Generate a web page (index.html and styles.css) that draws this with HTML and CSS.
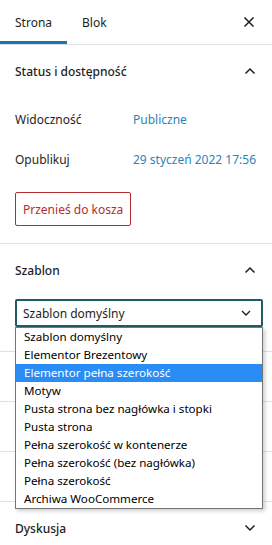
FILE: index.html
```html
<!DOCTYPE html>
<html lang="pl">
<head>
    <meta charset="UTF-8">
    <meta name="viewport" content="width=device-width, initial-scale=1.0">
    <title>Ustawienia strony</title>
    <link rel="stylesheet" href="styles.css">
</head>
<body>
    <div class="sidebar">
        <div class="tabs">
            <button class="tab tab-active">Strona</button>
            <button class="tab">Blok</button>
            <button class="close-button" aria-label="Zamknij">
                <svg width="12" height="12" viewBox="0 0 12 12"><path d="M1.5 1.5l9 9M10.5 1.5l-9 9" stroke="#1e1e1e" stroke-width="1.5" fill="none"/></svg>
            </button>
        </div>

        <!-- Status -->
        <div class="panel">
            <div class="panel-header">
                <span>Status i dostępność</span>
                <svg class="chevron" width="12" height="8" viewBox="0 0 12 8"><path d="M1.5 6.5l4.5-4.5 4.5 4.5" stroke="#1e1e1e" stroke-width="1.5" fill="none"/></svg>
            </div>
            <div class="panel-body status-body">
                <div class="status-row">
                    <span class="status-label">Widoczność</span>
                    <span class="status-value">Publiczne</span>
                </div>
                <div class="status-row">
                    <span class="status-label">Opublikuj</span>
                    <span class="status-value">29 styczeń 2022 17:56</span>
                </div>
                <button class="trash-button">Przenieś do kosza</button>
            </div>
        </div>

        <!-- Szablon -->
        <div class="panel template-panel">
            <div class="panel-header">
                <span>Szablon</span>
                <svg class="chevron" width="12" height="8" viewBox="0 0 12 8"><path d="M1.5 6.5l4.5-4.5 4.5 4.5" stroke="#1e1e1e" stroke-width="1.5" fill="none"/></svg>
            </div>
            <div class="panel-body template-body">
                <div class="select-box">
                    <span>Szablon domyślny</span>
                    <svg width="10" height="6" viewBox="0 0 10 6"><path d="M1 1l4 4 4-4" stroke="#1e1e1e" stroke-width="1.3" fill="none"/></svg>
                </div>
            </div>
            <ul class="select-list">
                <li>Szablon domyślny</li>
                <li>Elementor Brezentowy</li>
                <li class="selected">Elementor pełna szerokość</li>
                <li>Motyw</li>
                <li>Pusta strona bez nagłówka i stopki</li>
                <li>Pusta strona</li>
                <li>Pełna szerokość w kontenerze</li>
                <li>Pełna szerokość (bez nagłówka)</li>
                <li>Pełna szerokość</li>
                <li>Archiwa WooCommerce</li>
            </ul>
        </div>

        <!-- panels hidden under the list -->
        <div class="panel panel-collapsed"></div>
        <div class="panel panel-collapsed"></div>
        <div class="panel panel-collapsed"></div>

        <div class="panel">
            <div class="panel-header">
                <span>Dyskusja</span>
                <svg class="chevron" width="12" height="8" viewBox="0 0 12 8"><path d="M1.5 1.5l4.5 4.5 4.5-4.5" stroke="#1e1e1e" stroke-width="1.5" fill="none"/></svg>
            </div>
        </div>
    </div>
</body>
</html>
```

FILE: styles.css
```css
body {
    margin: 0;
    padding: 0;
    font-family: "Noto Sans", "Open Sans", sans-serif;
    font-size: 12px;
    color: #1e1e1e;
    background-color: #fff;
    overflow: hidden;
}

.sidebar {
    width: 272px;
    position: relative;
}

/* Tabs */
.tabs {
    display: flex;
    align-items: stretch;
    height: 44px;
    border-bottom: 1px solid #e0e0e0;
}

.tab {
    border: none;
    background: none;
    padding: 0 15px;
    font: inherit;
    color: #1e1e1e;
    cursor: pointer;
}

.tab-active {
    box-shadow: inset 0 -3px 0 #1a76ac;
}

.close-button {
    margin-left: auto;
    width: 48px;
    border: none;
    background: none;
    display: flex;
    align-items: center;
    justify-content: center;
    padding: 0 0 0 2px;
}

/* Panels */
.panel {
    border-bottom: 1px solid #e0e0e0;
}

.panel-header {
    display: flex;
    justify-content: space-between;
    align-items: center;
    height: 52px;
    padding: 0 16px 0 15px;
    font-weight: 500;
}

.panel-collapsed {
    height: 49px;
}

.status-body {
    padding: 6px 15px 17px;
}

.status-row {
    display: flex;
    align-items: center;
    height: 32px;
    margin-bottom: 8px;
}

.status-label {
    width: 118px;
}

.status-value {
    color: #2b84b8;
}

.trash-button {
    margin-top: 9px;
    height: 34px;
    padding: 0 7px;
    border: 1px solid #b32d2e;
    border-radius: 2px;
    background: #fff;
    color: #b32d2e;
    font: inherit;
}

/* Szablon */
.template-panel {
    position: relative;
}

.template-body {
    padding: 3px 9px 24px 15px;
}

.select-box {
    display: flex;
    justify-content: space-between;
    align-items: center;
    height: 24px;
    padding: 0 10px 0 6px;
    border: 2px solid #215a69;
    border-radius: 2px;
}

.select-list {
    position: absolute;
    top: 83px;
    left: 15px;
    width: 246px;
    margin: 0;
    padding: 0;
    list-style: none;
    background: #fff;
    border: 1px solid #767676;
    box-shadow: 2px 2px 4px rgba(0, 0, 0, 0.2);
    z-index: 2;
    color: #000;
    font-size: 11.6px;
}

.select-list li {
    height: 18px;
    line-height: 18px;
    padding-left: 8px;
}

.select-list .selected {
    background-color: #2a8cf5;
    color: #fff;
}
```
